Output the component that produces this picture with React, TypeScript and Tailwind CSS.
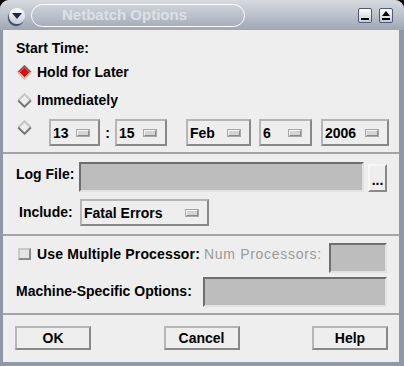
import React from "react";

const raised =
  "border-2 border-t-[#b6b6b6] border-l-[#b6b6b6] border-b-[#888888] border-r-[#888888]";
const sunken =
  "border-2 border-t-[#6e6e6e] border-l-[#6e6e6e] border-b-[#e2e2e2] border-r-[#e2e2e2] bg-[#bdbdbd]";

function Indicator() {
  return (
    <div className="w-[12px] h-[6px] border border-t-[#f4f4f4] border-l-[#f4f4f4] border-b-[#8a8a8a] border-r-[#8a8a8a] bg-[#d4d4d4] outline outline-1 outline-[#a8a8a8]" />
  );
}

function Dropdown({ value, className }: { value: string; className: string }) {
  return (
    <div
      className={`h-[27px] flex items-center justify-between ${raised} pl-[2px] pr-[9px] ${className}`}
    >
      <span className="leading-[16px]">{value}</span>
      <Indicator />
    </div>
  );
}

function Radio({ checked }: { checked: boolean }) {
  return (
    <svg width="15" height="15" viewBox="0 0 15 15" className="shrink-0">
      {checked && <polygon points="7.5,2.5 12.5,7.5 7.5,12.5 2.5,7.5" fill="#ff0000" />}
      <polyline
        points="1.2,7.5 7.5,1.2 13.8,7.5"
        fill="none"
        stroke={checked ? "#6a6a6a" : "#c6c6c6"}
        strokeWidth="2"
      />
      <polyline
        points="1.2,7.5 7.5,13.8 13.8,7.5"
        fill="none"
        stroke={checked ? "#c6c6c6" : "#7a7a7a"}
        strokeWidth="2"
      />
    </svg>
  );
}

function Button({ label }: { label: string }) {
  return (
    <div
      className={`w-[76px] h-[24px] flex items-center justify-center ${raised} leading-[16px]`}
    >
      {label}
    </div>
  );
}

export default function App() {
  return (
    <div className="w-[404px] h-[366px] bg-black font-['Liberation_Sans',Arial,sans-serif] text-[14px] font-bold text-black">
      <div className="w-[404px] h-[366px] rounded-t-[9px] overflow-hidden bg-[#8e98a6] flex flex-col">
        {/* Title bar */}
        <div className="h-[30px] shrink-0 flex items-center pl-[9px] pr-[11px] bg-gradient-to-b from-[#d6dae0] via-[#bcc2cb] to-[#9ea7b4]">
          <div className="relative w-[16px] h-[16px] mt-[1px] rounded-full bg-gradient-to-b from-[#ffffff] to-[#c6ccd6] shadow-[-1px_2px_1px_#3c4a62] flex items-center justify-center">
            <svg width="10" height="6" viewBox="0 0 10 6" className="mt-[1px]">
              <polygon points="0,0 10,0 5,6" fill="#1e2a44" />
            </svg>
          </div>
          <div className="ml-[6px] w-[214px] h-[23px] rounded-full border-[1.5px] border-white flex items-center pl-[30px]">
            <span className="text-[15px] text-[#dde1e6] leading-[16px]">
              Netbatch Options
            </span>
          </div>
          <div className="ml-auto w-[14px] h-[15px] rounded-[2px] border border-[#4c5a74] bg-gradient-to-b from-white to-[#c4ccd8] flex items-end justify-center pb-[2px]">
            <div className="w-[8px] h-[2px] bg-black" />
          </div>
          <div className="ml-[7px] w-[14px] h-[15px] rounded-[2px] border border-[#4c5a74] bg-gradient-to-b from-white to-[#c4ccd8] flex flex-col items-center justify-center">
            <svg width="8" height="9" viewBox="0 0 8 9">
              <polygon points="4,0 8,5 0,5" fill="black" />
              <rect x="0" y="7" width="8" height="2" fill="black" />
            </svg>
          </div>
        </div>

        {/* Body */}
        <div className="flex-1 flex pl-[3px] pr-[5px] pb-[4px]">
          <div className="flex-1 bg-[#eeeeee] flex flex-col">
            {/* Section 1 */}
            <div className="h-[124px] shrink-0 border-b-2 border-[#a4a4a4] flex flex-col pt-[10px]">
              <div className="pl-[13px] leading-[16px]">Start Time:</div>
              <div className="mt-[8px] pl-[14px] flex items-center leading-[16px]">
                <Radio checked={true} />
                <span className="ml-[5px]">Hold for Later</span>
              </div>
              <div className="mt-[12px] pl-[14px] flex items-center leading-[16px]">
                <Radio checked={false} />
                <span className="ml-[5px]">Immediately</span>
              </div>
              <div className="mt-[11px] pl-[14px] flex items-start">
                <div className="mt-[1px]">
                  <Radio checked={false} />
                </div>
                <Dropdown value="13" className="ml-[17px] w-[51px]" />
                <div className="w-[15px] h-[27px] flex items-center justify-center leading-[16px]">
                  :
                </div>
                <Dropdown value="15" className="w-[52px]" />
                <Dropdown value="Feb" className="ml-[19px] w-[65px]" />
                <Dropdown value="6" className="ml-[8px] w-[53px]" />
                <Dropdown value="2006" className="ml-[9px] w-[68px]" />
              </div>
            </div>

            {/* Section 2 */}
            <div className="h-[82px] shrink-0 border-b-2 border-[#a4a4a4] flex flex-col pt-[8px]">
              <div className="flex items-start pl-[13px]">
                <div className="w-[63px] mt-[4px] leading-[16px]">Log File:</div>
                <div className={`w-[285px] h-[30px] ${sunken}`} />
                <div className="ml-[4px] mt-[2px] w-[19px] h-[28px] border-2 border-t-[#f6f6f6] border-l-[#f6f6f6] border-b-[#8a8a8a] border-r-[#8a8a8a] flex items-end justify-center pb-[5px] leading-[10px]">
                  ...
                </div>
              </div>
              <div className="mt-[7px] flex items-start pl-[16px]">
                <div className="w-[61px] mt-[5px] leading-[16px]">Include:</div>
                <Dropdown value="Fatal Errors" className="w-[129px]" />
              </div>
            </div>

            {/* Section 3 */}
            <div className="h-[79px] shrink-0 border-b-2 border-[#a4a4a4] flex flex-col pt-[7px] pr-[12px]">
              <div className="flex items-start pl-[15px]">
                <div className="mt-[5px] w-[13px] h-[12px] border-2 border-t-[#c8c8c8] border-l-[#c8c8c8] border-b-[#8a8a8a] border-r-[#8a8a8a] bg-[#e4e4e4]" />
                <span className="ml-[6px] mt-[3px] leading-[16px] tracking-[0.15px]">
                  Use Multiple Processor:
                </span>
                <span className="ml-[4px] mt-[3px] leading-[16px] font-normal text-[#9a9a9a] tracking-[0.7px]">
                  Num Processors:
                </span>
                <div className={`ml-auto w-[58px] h-[30px] ${sunken}`} />
              </div>
              <div className="mt-[4px] flex items-start pl-[13px]">
                <span className="mt-[6px] leading-[16px]">Machine-Specific Options:</span>
                <div className={`ml-auto w-[184px] h-[30px] ${sunken}`} />
              </div>
            </div>

            {/* Buttons */}
            <div className="flex-1 flex items-start justify-between pt-[11px] pl-[12px] pr-[11px]">
              <Button label="OK" />
              <Button label="Cancel" />
              <Button label="Help" />
            </div>
          </div>
        </div>
      </div>
    </div>
  );
}
